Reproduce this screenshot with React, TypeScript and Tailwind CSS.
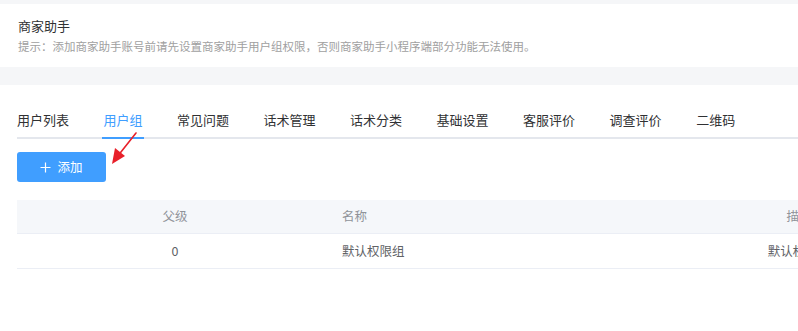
const tabs = ['用户列表', '用户组', '常见问题', '话术管理', '话术分类', '基础设置', '客服评价', '调查评价', '二维码']

const font = { fontFamily: '"Noto Sans CJK SC", "Noto Sans", sans-serif' }

export default function App() {
  return (
    <div className="w-[798px] h-[331px] overflow-hidden bg-white text-[#303133]" style={font}>
      {/* Header card */}
      <div className="bg-[#f5f6f8] pt-[4px] pb-[18px]">
        <div className="bg-white h-[63px] px-[18px] pt-[13px]">
          <div className="text-[13px] leading-[18px] text-[#303133]">商家助手</div>
          <div className="mt-[3px] text-[11.5px] leading-[16px] text-[#a0a0a0] whitespace-nowrap">
            提示：添加商家助手账号前请先设置商家助手用户组权限，否则商家助手小程序端部分功能无法使用。
          </div>
        </div>
      </div>

      <div className="pl-[17px]">
        {/* Tabs */}
        <div className="relative mt-[24px] flex border-b-2 border-[#e4e7ed] h-[30px]">
          {tabs.map((t, i) => (
            <div
              key={t}
              className={`relative shrink-0 text-[13px] leading-[17px] pt-[2px] whitespace-nowrap ${
                i === 0 ? 'pl-0 pr-[17.25px]' : 'px-[17.25px]'
              } ${i === 1 ? 'text-[#409eff]' : 'text-[#303133]'}`}
            >
              {t}
              {i === 1 && (
                <span className="absolute left-[16px] right-[16px] -bottom-[2px] h-[2px] bg-[#409eff]" />
              )}
            </div>
          ))}
        </div>

        {/* Add button */}
        <div className="relative mt-[13px]">
          <button className="w-[89px] h-[30px] rounded-[3px] bg-[#409eff] text-white text-[12.5px] flex items-center justify-center gap-[6px]">
            <svg width="11" height="11" viewBox="0 0 11 11">
              <path d="M5.5 0.5v10M0.5 5.5h10" stroke="white" strokeWidth="1.2" />
            </svg>
            添加
          </button>
          <svg className="absolute left-[73px] -top-[22px]" width="60" height="50" viewBox="0 0 60 50">
            <line x1="46" y1="3" x2="27" y2="27" stroke="#e8202a" strokeWidth="1.6" strokeLinecap="round" />
            <polygon points="22,34 25,18 35,26" fill="#e8202a" />
          </svg>
        </div>

        {/* Table */}
        <div className="mt-[18px] w-[1000px] text-[12.5px]">
          <div className="grid grid-cols-[316px_366px_200px] h-[34px] items-center bg-[#f5f7fa] border-b border-[#ebeef5] text-[#909399]">
            <div className="text-center">父级</div>
            <div className="pl-[9px]">名称</div>
            <div className="text-center">描述</div>
          </div>
          <div className="grid grid-cols-[316px_366px_200px] h-[35px] items-center border-b border-[#ebeef5] text-[#606266]">
            <div className="text-center">0</div>
            <div className="pl-[9px]">默认权限组</div>
            <div className="text-center">默认权限组</div>
          </div>
        </div>
      </div>
    </div>
  )
}
